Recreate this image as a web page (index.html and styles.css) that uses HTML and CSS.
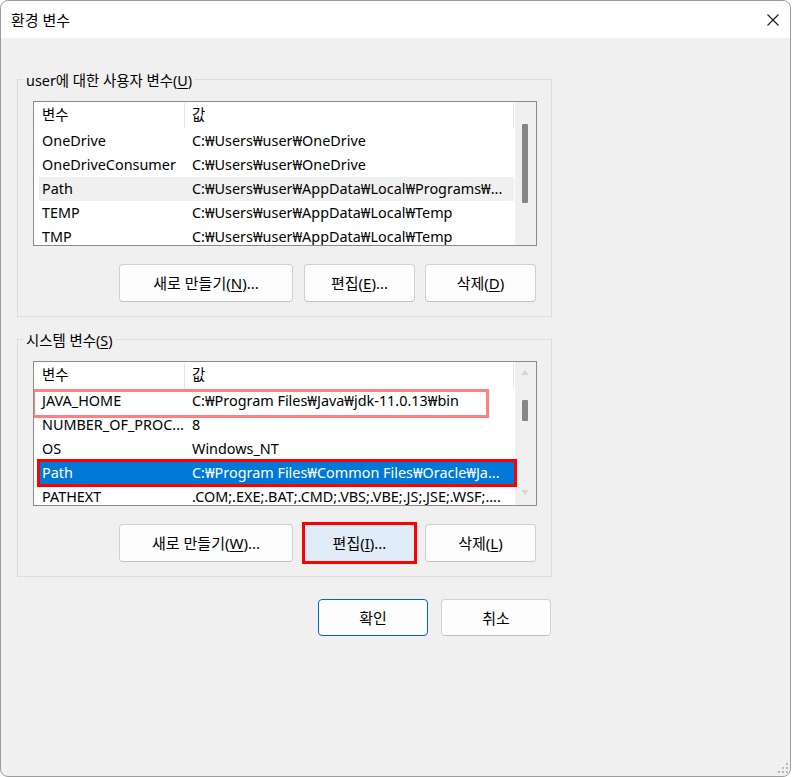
FILE: index.html
```html
<!DOCTYPE html>
<html lang="ko">
<head>
<meta charset="utf-8">
<title>환경 변수</title>
<link rel="stylesheet" href="styles.css">
</head>
<body>
<div class="window">
  <div class="titlebar">
    <span class="title">환경 변수</span>
    <svg class="close" width="12" height="12" viewBox="0 0 12 12"><path d="M0.5 0.5L11.5 11.5M11.5 0.5L0.5 11.5" stroke="#1b1b1b" stroke-width="1.1" fill="none"/></svg>
  </div>
  <div class="content">
    <div class="group">
      <div class="group-label">user에 대한 사용자 변수(<u>U</u>)</div>
      <div class="list">
        <div class="table">
          <div class="head"><div class="c1">변수</div><div class="c2">값</div></div>
          <div class="row"><div class="c1">OneDrive</div><div class="c2">C:₩Users₩user₩OneDrive</div></div>
          <div class="row"><div class="c1">OneDriveConsumer</div><div class="c2">C:₩Users₩user₩OneDrive</div></div>
          <div class="row inactive"><div class="c1">Path</div><div class="c2">C:₩Users₩user₩AppData₩Local₩Programs₩...</div></div>
          <div class="row"><div class="c1">TEMP</div><div class="c2">C:₩Users₩user₩AppData₩Local₩Temp</div></div>
          <div class="row"><div class="c1">TMP</div><div class="c2">C:₩Users₩user₩AppData₩Local₩Temp</div></div>
        </div>
        <div class="scrollbar">
          <div class="thumb thumb-user"></div>
        </div>
      </div>
      <div class="btn-row">
        <button class="btn w-new">새로 만들기(<u>N</u>)...</button>
        <button class="btn w-std">편집(<u>E</u>)...</button>
        <button class="btn w-std">삭제(<u>D</u>)</button>
      </div>
    </div>

    <div class="group sys">
      <div class="group-label">시스템 변수(<u>S</u>)</div>
      <div class="list">
        <div class="table">
          <div class="head"><div class="c1">변수</div><div class="c2">값</div></div>
          <div class="row"><div class="c1">JAVA_HOME</div><div class="c2">C:₩Program Files₩Java₩jdk-11.0.13₩bin</div></div>
          <div class="row"><div class="c1">NUMBER_OF_PROC...</div><div class="c2">8</div></div>
          <div class="row"><div class="c1">OS</div><div class="c2">Windows_NT</div></div>
          <div class="row selected"><div class="c1">Path</div><div class="c2">C:₩Program Files₩Common Files₩Oracle₩Ja...</div></div>
          <div class="row"><div class="c1">PATHEXT</div><div class="c2">.COM;.EXE;.BAT;.CMD;.VBS;.VBE;.JS;.JSE;.WSF;....</div></div>
        </div>
        <div class="scrollbar arrows">
          <div class="arrow up"></div>
          <div class="thumb thumb-sys"></div>
          <div class="arrow down"></div>
        </div>
        <div class="mark mark-java"></div>
        <div class="mark mark-path"></div>
      </div>
      <div class="btn-row">
        <button class="btn w-new">새로 만들기(<u>W</u>)...</button>
        <button class="btn w-std focused">편집(<u>I</u>)...</button>
        <button class="btn w-std">삭제(<u>L</u>)</button>
      </div>
    </div>

    <div class="dialog-btns">
      <button class="btn w-dlg default">확인</button>
      <button class="btn w-dlg">취소</button>
    </div>
  </div>
  <svg class="grip" width="11" height="11" viewBox="0 0 11 11">
    <rect x="8" y="0" width="2" height="2" fill="#b8b8b8"/>
    <rect x="4" y="4" width="2" height="2" fill="#b8b8b8"/>
    <rect x="8" y="4" width="2" height="2" fill="#b8b8b8"/>
    <rect x="0" y="8" width="2" height="2" fill="#b8b8b8"/>
    <rect x="4" y="8" width="2" height="2" fill="#b8b8b8"/>
    <rect x="8" y="8" width="2" height="2" fill="#b8b8b8"/>
  </svg>
</div>
</body>
</html>
```
FILE: styles.css
```css
* { box-sizing: border-box; }

body {
  margin: 0;
  background: #ffffff;
  font-family: "Noto Sans", "Noto Sans CJK KR", sans-serif;
  font-size: 14.4px;
  color: #000;
}

.window {
  position: relative;
  width: 791px;
  height: 777px;
  border: 1px solid #9c9c9c;
  border-radius: 8px;
  background: #f0f0f0;
  overflow: hidden;
}

.titlebar {
  height: 37px;
  background: #ffffff;
  display: flex;
  align-items: center;
  justify-content: space-between;
  padding: 0 11px 0 10px;
  border-radius: 7px 7px 0 0;
}

.title {
  font-size: 15px;
  line-height: 20px;
}

.close { display: block; }

.content {
  padding-left: 16px;
}

.group {
  width: 535px;
  border: 1px solid #dcdcdc;
  padding: 0 15px 14px;
  margin-top: 41px;
}

.group.sys { margin-top: 22px; }

.group-label {
  width: fit-content;
  margin: -9px 0 0 -9px;
  padding: 0 2px;
  line-height: 20px;
  height: 20px;
  background: #f0f0f0;
  white-space: nowrap;
}

u { text-decoration-thickness: 1px; text-underline-offset: 2px; }

.list {
  position: relative;
  margin-top: 10px;
  width: 504px;
  height: 145px;
  border: 1px solid #8b8b8b;
  background: #ffffff;
  display: flex;
  gap: 1px;
  overflow: hidden;
}

.table {
  width: 480px;
  padding-left: 5px;
  flex: none;
}

.head, .row {
  display: flex;
  width: 475px;
  white-space: nowrap;
}

.head { height: 27px; padding-top: 1px; }
.row { height: 24px; line-height: 24px; }
.head .c1, .head .c2 { line-height: 24px; }

.c1 {
  width: 146px;
  padding-left: 3px;
  overflow: hidden;
  flex: none;
}

.c2 {
  width: 329px;
  padding-left: 7px;
  overflow: hidden;
  flex: none;
}

.head .c1, .head .c2 {
  border-right: 1px solid #e5e5e5;
  height: 25px;
}

.row.inactive { background: #f0f0f0; }
.row.selected { background: #0078d7; color: #ffffff; }

.scrollbar {
  width: 21px;
  flex: none;
  background: #f0f0f0;
  display: flex;
  flex-direction: column;
}

.thumb {
  width: 6px;
  margin-left: 7px;
  background: #868686;
  border-radius: 1px;
}

.thumb-user { margin-top: 22px; height: 79px; }

.arrows { position: relative; }
.thumb-sys { margin-top: 38px; height: 21px; }

.arrow {
  position: absolute;
  left: 6px;
  width: 0;
  height: 0;
  border-left: 4px solid transparent;
  border-right: 4px solid transparent;
}
.arrow.up { top: 8px; border-bottom: 5px solid #d6d6d6; }
.arrow.down { top: 128px; border-top: 5px solid #d6d6d6; }

.mark {
  position: absolute;
  border-style: solid;
  pointer-events: none;
}

.mark-java {
  left: -2px;
  top: 27px;
  width: 457px;
  height: 29px;
  border-width: 3px;
  border-color: #ff8080;
}

.mark-path {
  left: 3px;
  top: 97px;
  width: 480px;
  height: 28px;
  border-width: 3px;
  border-color: #ff0000;
}

.btn-row {
  display: flex;
  justify-content: flex-end;
  margin-top: 18px;
  width: 503px;
}

.btn {
  font-family: inherit;
  font-size: 15px;
  color: #000;
  height: 38px;
  background: #fdfdfd;
  border: 1px solid #d0d0d0;
  border-bottom-color: #c2c2c2;
  border-radius: 4px;
  padding: 0;
  white-space: nowrap;
  line-height: 20px;
}

.w-new { width: 174px; }
.w-std { width: 111px; margin-left: 10px; }
.btn-row .w-new + .w-std { margin-left: 11px; }

.btn.focused {
  background: #e0ecf7;
  border-color: #4a90d9;
  border-radius: 0;
  outline: 3px solid #ff0000;
  outline-offset: -1px;
}

.dialog-btns {
  display: flex;
  justify-content: flex-end;
  width: 534px;
  margin-top: 22px;
}

.w-dlg { width: 110px; height: 37px; margin-left: 13px; }

.btn.default { border-color: #0067c0; background: #fdfdfd; }

.grip {
  position: absolute;
  right: 1px;
  bottom: 2px;
}
```
